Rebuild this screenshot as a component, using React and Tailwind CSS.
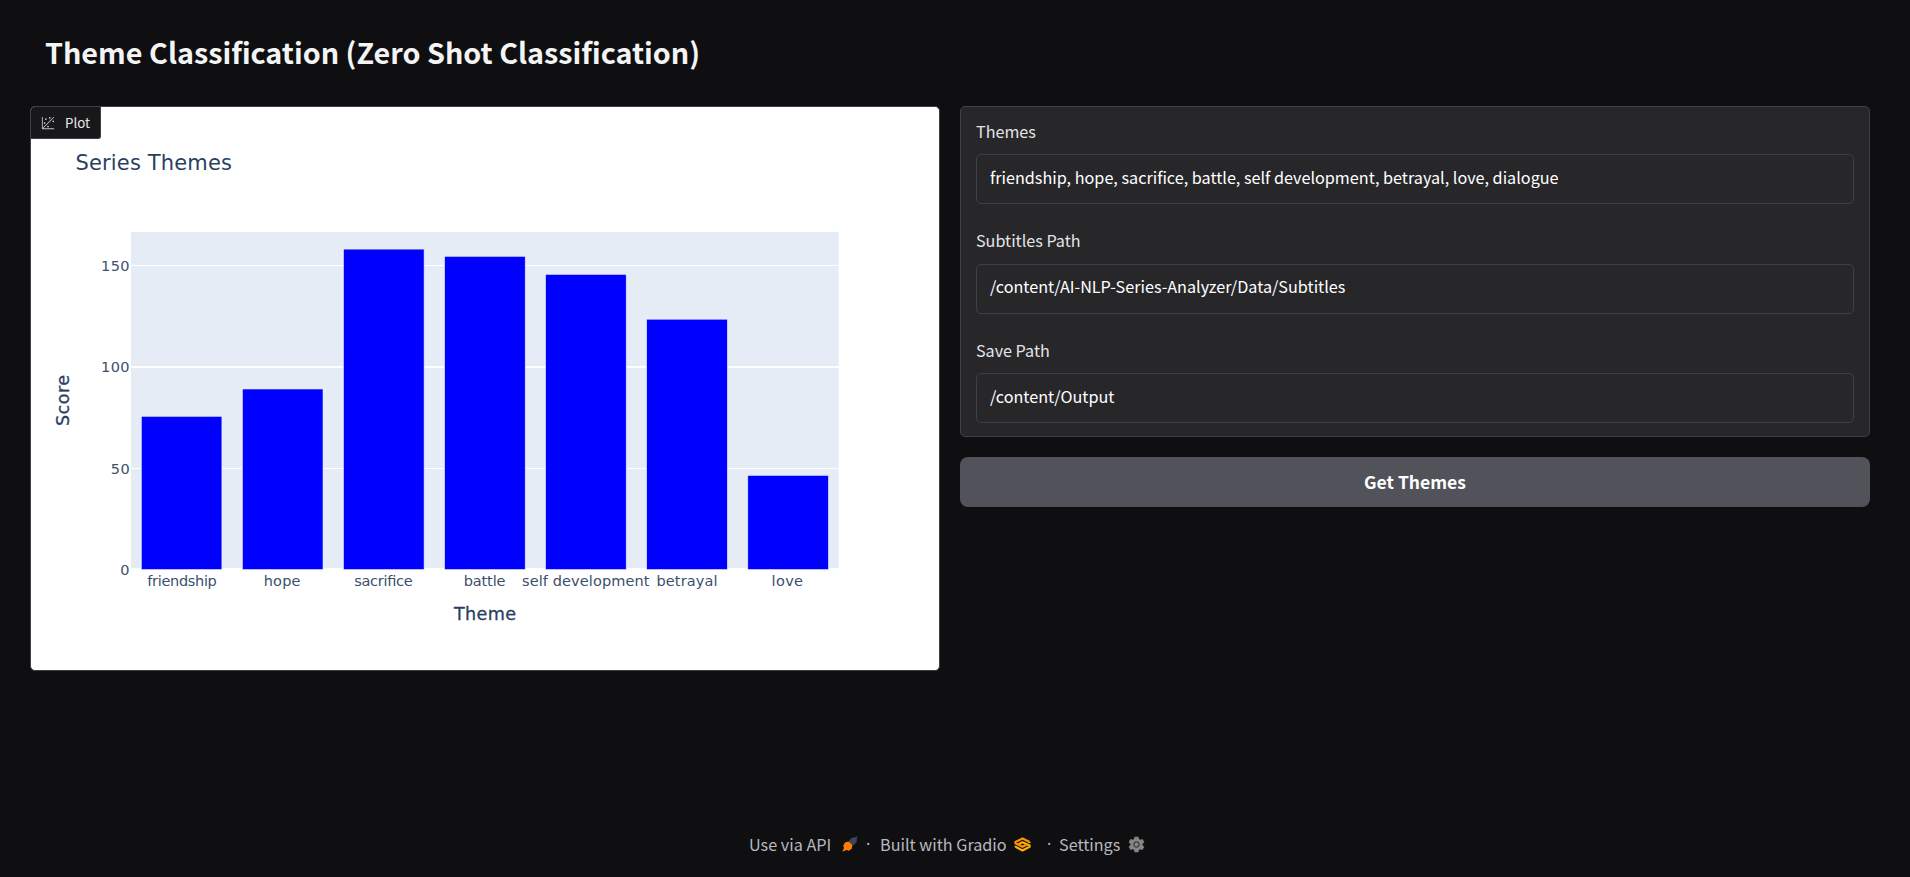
const bars = [
  { label: "friendship", x: 141.3, top: 416.3, textX: 147.3, textW: 69.5 },
  { label: "hope", x: 242.4, top: 389, textX: 263.7, textW: 36.8 },
  { label: "sacrifice", x: 343.5, top: 249.1, textX: 354.2, textW: 58.5 },
  { label: "battle", x: 444.6, top: 256.3, textX: 463.7, textW: 41.8 },
  { label: "self development", x: 545.6, top: 274.4, textX: 522, textW: 127.5 },
  { label: "betrayal", x: 646.7, top: 319.2, textX: 656.5, textW: 61 },
  { label: "love", x: 747.8, top: 475.4, textX: 771.5, textW: 31.5 },
];

const ticks = [
  { label: "0", y: 575, x: 120.3, w: 9 },
  { label: "50", y: 474, x: 110.7, w: 19 },
  { label: "100", y: 372, x: 101, w: 28.5 },
  { label: "150", y: 271, x: 101, w: 28.5 },
];

const fields = [
  { label: "Themes", value: "friendship, hope, sacrifice, battle, self development, betrayal, love, dialogue", top: "pt-[14px]", gap: "mt-[13px]", lift: "pb-1" },
  { label: "Subtitles Path", value: "/content/AI-NLP-Series-Analyzer/Data/Subtitles", top: "pt-[13px]", gap: "mt-[14px]", lift: "pb-[6px]" },
  { label: "Save Path", value: "/content/Output", top: "pt-[13px]", gap: "mt-[13px]", lift: "pb-1" },
];

function PlotIcon() {
  return (
    <svg className="size-[14px] shrink-0" viewBox="0 0 32 32" fill="#c4c4c8">
      <circle cx="20" cy="4" r="2" />
      <circle cx="8" cy="16" r="2" />
      <circle cx="28" cy="12" r="2" />
      <circle cx="11" cy="7" r="2" />
      <circle cx="16" cy="24" r="2" />
      <path d="M30 3.413L28.586 2L4 26.585V2H2v26a2 2 0 0 0 2 2h26v-2H5.413Z" />
    </svg>
  );
}

function Chart() {
  return (
    <svg className="block h-[563px] w-[908px] font-['DejaVu_Sans',Verdana,sans-serif]" viewBox="31 107 908 563" fill="#2a3f5f">
      <rect x="131" y="232" width="707.6" height="336" fill="#e5ecf6" />
      <g fill="#ffffff">
        <rect x="131" y="265" width="708" height="1" />
        <rect x="131" y="366" width="708" height="2" />
        <rect x="131" y="468" width="708" height="1" />
        <rect x="131" y="568" width="708" height="2" />
      </g>
      {bars.map((b) => (
        <rect key={b.label} x={b.x} y={b.top} width="80.6" height={569.5 - b.top} fill="#0000ff" stroke="#e5ecf6" strokeWidth="0.6" />
      ))}
      <text x="75.5" y="170" fontSize="21" textLength="156.5">Series Themes</text>
      <g fontSize="14.5" fill="#3b4f6d">
        {ticks.map((t) => (
          <text key={t.label} x={t.x} y={t.y} textLength={t.w}>{t.label}</text>
        ))}
        {bars.map((b) => (
          <text key={b.label} x={b.textX} y="586" textLength={b.textW}>{b.label}</text>
        ))}
      </g>
      <g fontSize="17.6" stroke="#2a3f5f" strokeWidth="0.3">
        <text x="454" y="620" textLength="62">Theme</text>
        <text transform="translate(69 426) rotate(-90)" textLength="51">Score</text>
      </g>
    </svg>
  );
}

function RocketIcon() {
  return (
    <svg className="size-4" viewBox="0 0 16 16">
      <path d="M15.8.3 13.5 1.3C10 1 7.300 3.400 6.800 6.600l3.200 3C13.400 9 15.400 6 14.800 2.600Z" fill="#3b465c" />
      <path d="M6.5 5.6 3 6.500 1 10.200l1 .8L1.500 13.200.3 15.800l2.900-1.300 2.300-.4 1 1 3.400-2.700.4-3.400Z" fill="#ff7c00" />
    </svg>
  );
}

function GradioLogo() {
  return (
    <svg className="h-[15px] w-[17px]" viewBox="0 0 17 15" fill="none" strokeLinejoin="round">
      <path d="M1.400 9.800 8.500 13.400l7.100-3.600V8.600L8.500 5.300 4.600 7.200" stroke="#ffb000" strokeWidth="2.200" />
      <path d="M15.600 5 8.500 1.400 1.400 5v1.300l7.100 3.500 3.900-2" stroke="#ff9200" strokeWidth="2.200" />
      <path d="M1.400 9.800v-1M15.600 5v1" stroke="#ffc400" strokeWidth="2" />
    </svg>
  );
}

function GearIcon() {
  return (
    <svg className="size-[17px]" viewBox="0 0 24 24" fill="#858585">
      <path d="M9.200 1h5.600l.6 3.300 1.800 1 3.200-1.200 2.700 4.700-2.500 2.200v2l2.500 2.200-2.700 4.700-3.200-1.200-1.800 1-.6 3.300H9.200l-.6-3.300-1.800-1-3.200 1.200-2.700-4.700L3.400 13v-2L.9 8.800l2.700-4.700 3.200 1.200 1.800-1Z" />
      <circle cx="12" cy="12" r="3.600" fill="#858585" stroke="#404042" strokeWidth="1.700" />
    </svg>
  );
}

export default function App() {
  return (
    <div className="flex h-[877px] w-full flex-col bg-[#0f0f11] px-[30px] font-['Noto_Sans_CJK_SC',sans-serif] text-[#f4f4f5]">
      <header className="flex h-[106px] shrink-0 items-start pt-[32px] pl-[15px]">
        <h1 className="text-[28.75px] leading-[40px] font-bold whitespace-nowrap">Theme Classification (Zero Shot Classification)</h1>
      </header>

      <main className="grid grid-cols-[910px_910px] items-start gap-5">
        <section className="relative h-[565px] overflow-hidden rounded-[5px] border border-[#3f3f46] bg-white">
          <Chart />
          <div className="absolute top-0 left-0 flex h-8 w-[70px] items-center gap-[10px] rounded-br-[3px] border-r border-b border-[#3f3f46] bg-[#18181b] pl-[10px] text-[13.3px] leading-5 text-[#e8e8ea]">
            <PlotIcon />
            <span>Plot</span>
          </div>
        </section>

        <section className="flex flex-col gap-5">
          <div className="rounded-[5px] border border-[#3f3f46] bg-[#27272a]">
            {fields.map((f) => (
              <div key={f.label} className={`px-[15px] pb-[13px] ${f.top}`}>
                <div className="text-[16.15px] leading-5 text-[#e4e4e7]">{f.label}</div>
                <div className={`flex h-[50px] items-center rounded-[5px] border border-[#3f3f46] px-[13px] text-[16.2px] leading-6 text-white ${f.gap} ${f.lift}`}>
                  {f.value}
                </div>
              </div>
            ))}
          </div>
          <button className="h-[50px] rounded-lg bg-[#52525b] text-[17.5px] leading-6 font-bold text-white">Get Themes</button>
        </section>
      </main>

      <footer className="mt-auto mb-[21px] flex h-6 items-center text-[16.2px] leading-6 text-[#b8b8be]">
        <div className="flex w-full items-center pl-[719px] whitespace-nowrap">
          <span className="w-[93px]">Use via API</span>
          <span className="w-[23px]"><RocketIcon /></span>
          <span className="w-[15px] pl-px font-['Noto_Sans',sans-serif]">·</span>
          <span className="w-[134px]">Built with Gradio</span>
          <span className="w-[32px]"><GradioLogo /></span>
          <span className="w-[13px] pl-px font-['Noto_Sans',sans-serif]">·</span>
          <span className="w-[69px]">Settings</span>
          <GearIcon />
        </div>
      </footer>
    </div>
  );
}
